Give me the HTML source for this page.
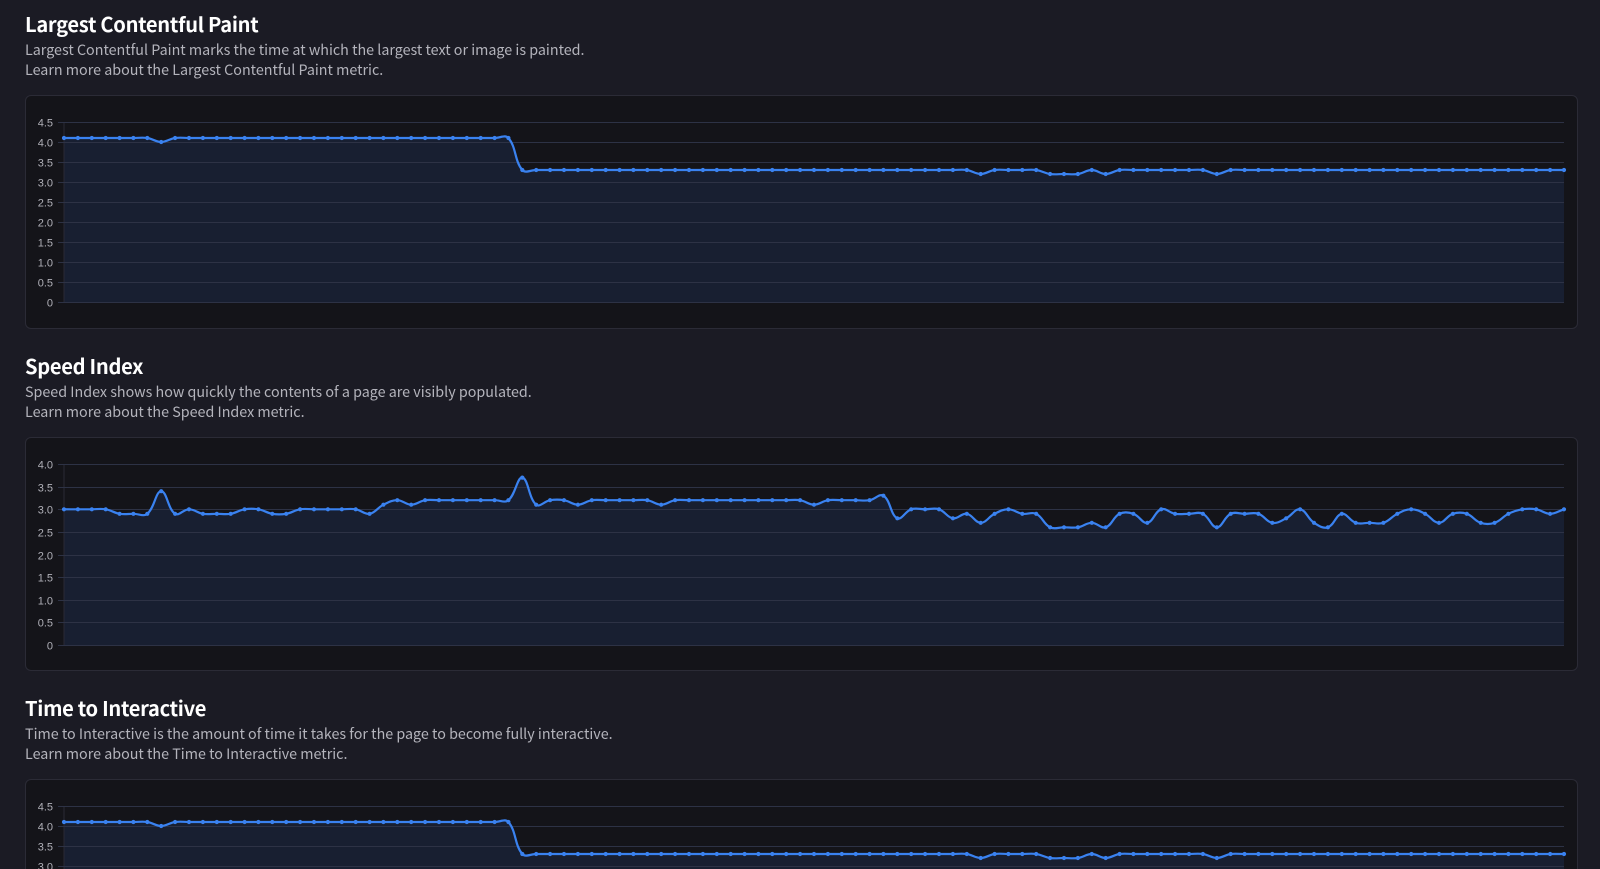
<!DOCTYPE html>
<html><head><meta charset="utf-8">
<style>
html,body{margin:0;padding:0;background:#1b1b24;width:1600px;height:869px;overflow:hidden}
body{font-family:"Noto Sans CJK JP","DejaVu Sans",sans-serif;position:relative}
.sec{position:absolute;left:25px;width:1553px;height:342px;overflow:hidden}
h2{margin:0;position:absolute;left:0;top:10px;font-size:20.1px;font-weight:700;color:#fff;line-height:28px;letter-spacing:-0.3px}
p{margin:0;position:absolute;left:0;top:39.5px;font-size:14.3px;color:#b4b4bc;line-height:20.5px}
.card{position:absolute;left:0;top:95px;width:1551px;height:232px;border:1px solid #2b2b36;border-radius:6px;background:#141419;overflow:hidden}
svg{position:absolute;left:-25px;top:-95px}
</style></head><body>
<div class="sec" style="top:0"><h2>Largest Contentful Paint</h2><p>Largest Contentful Paint marks the time at which the largest text or image is painted.<br>Learn more about the Largest Contentful Paint metric.</p><div class="card"><svg id="c1" width="1600" height="330"></svg></div></div>
<div class="sec" style="top:342px"><h2>Speed Index</h2><p>Speed Index shows how quickly the contents of a page are visibly populated.<br>Learn more about the Speed Index metric.</p><div class="card"><svg id="c2" width="1600" height="330"></svg></div></div>
<div class="sec" style="top:684px;height:185px"><h2>Time to Interactive</h2><p>Time to Interactive is the amount of time it takes for the page to become fully interactive.<br>Learn more about the Time to Interactive metric.</p><div class="card"><svg id="c3" width="1600" height="330"></svg></div></div>
<script>
function lcp(){var a=[];for(var i=0;i<109;i++){var v=i<=32?4.1:3.3;a.push(v);}a[7]=4.0;[66,71,72,73,75,83].forEach(function(k){a[k]=3.2});return a;}
var si=[3.0,3.0,3.0,3.0,2.9,2.9,2.9,3.4,2.9,3.0,2.9,2.9,2.9,3.0,3.0,2.9,2.9,3.0,3.0,3.0,3.0,3.0,2.9,3.1,3.2,3.1,3.2,3.2,3.2,3.2,3.2,3.2,3.2,3.7,3.1,3.2,3.2,3.1,3.2,3.2,3.2,3.2,3.2,3.1,3.2];
while(si.length<54)si.push(3.2);si.push(3.1);while(si.length<59)si.push(3.2);si.push(3.3);
si=si.concat([2.8,3.0,3.0,3.0,2.8,2.9,2.7,2.9,3.0,2.9,2.9,2.6,2.6,2.6,2.7,2.6,2.9,2.9,2.7,3.0,2.9,2.9,2.9,2.6,2.9,2.9,2.9,2.7,2.8,3.0,2.7,2.6,2.9,2.7,2.7,2.7,2.9,3.0,2.9,2.7,2.9,2.9,2.7,2.7,2.9,3.0,3.0,2.9,3.0]);
function draw(id,data,max,top,bot){
 var s=document.getElementById(id),x0=63,x1=1563,n=data.length,h='';
 var ticks=max*2, step=(bot-top)/ticks;
 function Y(v){return bot-(v/max)*(bot-top)}
 var pts=data.map(function(v,i){return [x0+(x1-x0)*i/(n-1),Y(v)]});
 var t=0.4,cp=[];
 for(var i=0;i<n;i++){var p=pts[i],pr=pts[i-1]||p,nx=pts[i+1]||p;
  var d01=Math.hypot(p[0]-pr[0],p[1]-pr[1]),d12=Math.hypot(nx[0]-p[0],nx[1]-p[1]);
  var fa=d01/(d01+d12)||0,fb=d12/(d01+d12)||0;fa*=t;fb*=t;
  cp.push([[p[0]-fa*(nx[0]-pr[0]),p[1]-fa*(nx[1]-pr[1])],[p[0]+fb*(nx[0]-pr[0]),p[1]+fb*(nx[1]-pr[1])]]);}
 var d='M'+pts[0][0]+' '+pts[0][1];
 for(var i=1;i<n;i++){d+='C'+cp[i-1][1][0].toFixed(1)+' '+cp[i-1][1][1].toFixed(1)+' '+cp[i][0][0].toFixed(1)+' '+cp[i][0][1].toFixed(1)+' '+pts[i][0].toFixed(1)+' '+pts[i][1].toFixed(1);}
 h+='<path d="'+d+'L'+x1+' '+bot+'L'+x0+' '+bot+'Z" fill="#181f31"/>';
 h+='<line x1="'+x0+'" y1="'+top+'" x2="'+x0+'" y2="'+bot+'" stroke="#2a2a35"/>';
 for(var k=0;k<=ticks;k++){var y=Math.round(bot-k*step)+0.5;var v=k/2;
  h+='<line x1="'+(x0-6)+'" y1="'+y+'" x2="'+x1+'" y2="'+y+'" stroke="#2d3245" stroke-width="1"/>';
  h+='<text x="52" y="'+(y+4)+'" text-anchor="end" font-family="Liberation Sans,sans-serif" font-size="11" fill="#b0b0b8">'+(k==0?'0':v.toFixed(1))+'</text>';}
 h+='<path d="'+d+'" fill="none" stroke="#3a82f0" stroke-width="2.2"/>';
 pts.forEach(function(p){h+='<circle cx="'+p[0].toFixed(1)+'" cy="'+p[1].toFixed(1)+'" r="2.1" fill="#3a82f0"/>'});
 s.innerHTML=h;
}
draw('c1',lcp(),4.5,121,301);
draw('c2',si,4.0,121,302);
draw('c3',lcp(),4.5,121,301);
</script>
</body></html>
